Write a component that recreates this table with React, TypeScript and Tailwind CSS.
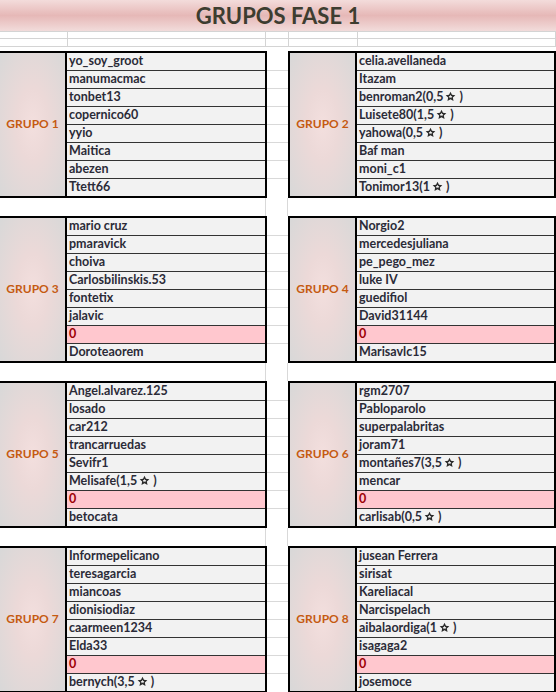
import React from 'react'

// datos de los grupos (0 = plaza vacía)
const groups: { label: string; names: string[] }[] = [
  { label: 'GRUPO 1', names: ['yo_soy_groot', 'manumacmac', 'tonbet13', 'copernico60', 'yyio', 'Maitica', 'abezen', 'Ttett66'] },
  { label: 'GRUPO 2', names: ['celia.avellaneda', 'Itazam', 'benroman2(0,5*)', 'Luisete80(1,5*)', 'yahowa(0,5*)', 'Baf man', 'moni_c1', 'Tonimor13(1*)'] },
  { label: 'GRUPO 3', names: ['mario cruz', 'pmaravick', 'choiva', 'Carlosbilinskis.53', 'fontetix', 'jalavic', '0', 'Doroteaorem'] },
  { label: 'GRUPO 4', names: ['Norgio2', 'mercedesjuliana', 'pe_pego_mez', 'luke IV', 'guedifiol', 'David31144', '0', 'Marisavlc15'] },
  { label: 'GRUPO 5', names: ['Angel.alvarez.125', 'losado', 'car212', 'trancarruedas', 'Sevifr1', 'Melisafe(1,5*)', '0', 'betocata'] },
  { label: 'GRUPO 6', names: ['rgm2707', 'Pabloparolo', 'superpalabritas', 'joram71', 'montañes7(3,5*)', 'mencar', '0', 'carlisab(0,5*)'] },
  { label: 'GRUPO 7', names: ['Informepelicano', 'teresagarcia', 'miancoas', 'dionisiodiaz', 'caarmeen1234', 'Elda33', '0', 'bernych(3,5*)'] },
  { label: 'GRUPO 8', names: ['jusean Ferrera', 'sirisat', 'Kareliacal', 'Narcispelach', 'aibalaordiga(1*)', 'isagaga2', '0', 'josemoce'] },
]

// estrella negra con centro blanco
const Star = () => (
  <svg className="ml-[2px] mr-[3px] inline-block h-[11px] w-[11px] align-[-1px]" viewBox="0 0 24 24">
    <path
      d="M12 1.5l3.2 6.9 7.4.8-5.5 5.1 1.5 7.4L12 17.9l-6.6 3.8 1.5-7.4-5.5-5.1 7.4-.8z"
      fill="#2a2a2a"
    />
    <path
      d="M12 8.2l1.3 2.6 2.8.3-2.1 1.9.6 2.8L12 14.4l-2.6 1.4.6-2.8-2.1-1.9 2.8-.3z"
      fill="#f2f2f2"
    />
  </svg>
)

const NameText = ({ text }: { text: string }) => {
  if (!text.includes('*')) return <>{text}</>
  const [before, after] = text.split('*')
  return (
    <>
      {before}
      <Star />
      {after}
    </>
  )
}

function Group({ label, names, side }: { label: string; names: string[]; side: 'left' | 'right' }) {
  const outer =
    side === 'left'
      ? 'w-[267px] border-y-2 border-r-2'
      : 'w-[268px] border-2'
  return (
    <div className={`flex h-[147px] border-black ${outer}`}>
      <div className="flex w-[67px] shrink-0 items-center justify-center border-r-2 border-black bg-[radial-gradient(ellipse_at_center,#f3dfde_0%,#ecd9d8_35%,#d8d8d8_100%)] pb-[1px] text-[12px] font-bold text-[#c55a11]">
        {label}
      </div>
      <div className="flex flex-1 flex-col">
        {names.map((n, i) => (
          <div
            key={i}
            className={`whitespace-nowrap pl-[2px] text-[12.5px] leading-[16px] font-bold ${
              i === 0 ? 'h-[17px]' : 'h-[18px] border-t border-[#333]'
            } ${n === '0' ? 'bg-[#ffc7ce] text-[#9c0006]' : 'bg-[#f2f2f2] text-[#2b2b38]'}`}
          >
            <NameText text={n} />
          </div>
        ))}
      </div>
    </div>
  )
}

// columna intermedia con las líneas de cuadrícula
function Spacer() {
  return (
    <div className="flex h-[147px] w-[21px] flex-col pt-[2px]">
      {Array.from({ length: 8 }).map((_, i) => (
        <div key={i} className={`h-[18px] ${i < 7 ? 'border-b border-[#d9d9d9]' : ''}`} />
      ))}
    </div>
  )
}

export default function App() {
  const pairs = [0, 2, 4, 6]
  return (
    <div className="h-[692px] w-[556px] overflow-hidden bg-white [font-family:Lato,sans-serif]">
      <div className="flex h-[31px] items-center justify-center bg-[linear-gradient(to_bottom,#f3dcdb_0%,#e6b8b7_50%,#f2dcdb_100%)] text-[22px] font-bold text-[#3d3d30]">
        GRUPOS FASE 1
      </div>

      {/* filas vacías de la hoja */}
      <div className="grid grid-cols-[68px_198px_23px_69px_198px] border-t border-[#d4d4d4]">
        {Array.from({ length: 10 }).map((_, i) => (
          <div key={i} className={`${i < 5 ? 'h-[7px]' : 'h-[8px]'} border-r border-b border-[#d4d4d4]`} />
        ))}
      </div>
      <div className="h-[4px]" />

      {pairs.map((p) => (
        <div key={p}>
          <div className="flex">
            <Group label={groups[p].label} names={groups[p].names} side="left" />
            <Spacer />
            <Group label={groups[p + 1].label} names={groups[p + 1].names} side="right" />
          </div>
          <div className="flex h-[18px]">
            <div className="w-[266px] border-r border-[#d9d9d9]" />
            <div className="w-[22px] border-r border-[#d9d9d9]" />
          </div>
        </div>
      ))}
    </div>
  )
}
